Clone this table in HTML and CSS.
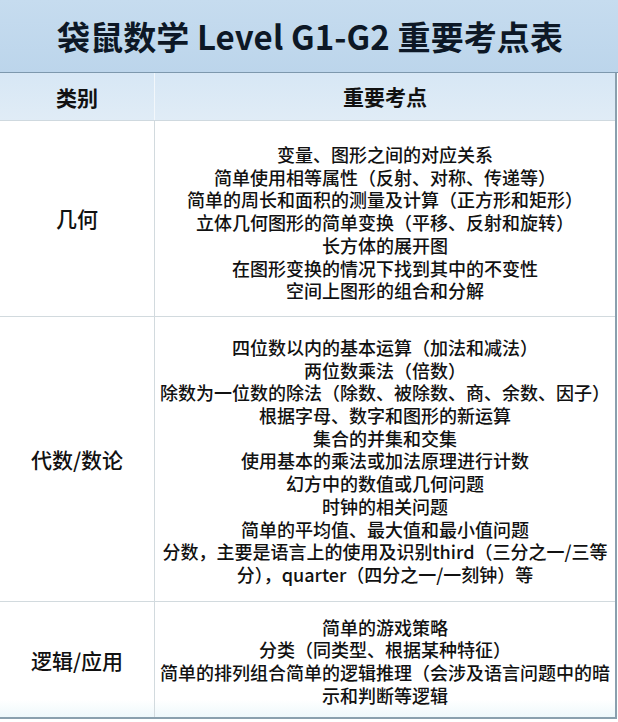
FILE: index.html
```html
<!DOCTYPE html>
<html lang="zh-CN">
<head>
<meta charset="utf-8">
<title>袋鼠数学 Level G1-G2 重要考点表</title>
<link rel="stylesheet" href="styles.css">
</head>
<body>
<div class="page">
  <div class="title">袋鼠数学 Level G1-G2 重要考点表</div>
  <div class="table">
    <div class="row head">
      <div class="cell cat">类别</div>
      <div class="cell items">重要考点</div>
    </div>
    <div class="row r1">
      <div class="cell cat">几何</div>
      <div class="cell items">
        <div>变量、图形之间的对应关系</div>
        <div>简单使用相等属性（反射、对称、传递等）</div>
        <div>简单的周长和面积的测量及计算（正方形和矩形）</div>
        <div>立体几何图形的简单变换（平移、反射和旋转）</div>
        <div>长方体的展开图</div>
        <div>在图形变换的情况下找到其中的不变性</div>
        <div>空间上图形的组合和分解</div>
      </div>
    </div>
    <div class="row r2">
      <div class="cell cat">代数/数论</div>
      <div class="cell items">
        <div>四位数以内的基本运算（加法和减法）</div>
        <div>两位数乘法（倍数）</div>
        <div>除数为一位数的除法（除数、被除数、商、余数、因子）</div>
        <div>根据字母、数字和图形的新运算</div>
        <div>集合的并集和交集</div>
        <div>使用基本的乘法或加法原理进行计数</div>
        <div>幻方中的数值或几何问题</div>
        <div>时钟的相关问题</div>
        <div>简单的平均值、最大值和最小值问题</div>
        <div>分数，主要是语言上的使用及识别third（三分之一/三等<br>分），quarter（四分之一/一刻钟）等</div>
      </div>
    </div>
    <div class="row r3">
      <div class="cell cat">逻辑/应用</div>
      <div class="cell items">
        <div>简单的游戏策略</div>
        <div>分类（同类型、根据某种特征）</div>
        <div>简单的排列组合简单的逻辑推理（会涉及语言问题中的暗<br>示和判断等逻辑</div>
      </div>
    </div>
  </div>
</div>
</body>
</html>
```
FILE: styles.css
```css
html, body {
  margin: 0;
  padding: 0;
  background: #ffffff;
}
body {
  font-family: "Noto Sans CJK SC", "Noto Sans", sans-serif;
  color: #111111;
}
.page {
  width: 618px;
  height: 722px;
  overflow: hidden;
}
.title {
  height: 72px;
  border-bottom: 1px solid #7d98ad;
  background: linear-gradient(#c6dcef, #bcd5eb);
  display: flex;
  align-items: center;
  justify-content: center;
  font-size: 33px;
  font-weight: 700;
  color: #0d1826;
  letter-spacing: 0.1px;
  padding-left: 2px;
}
.table {
  width: 615px;
  border-right: 2px solid #8aa0ae;
  border-bottom: 2px solid #8aa0ae;
}
.row {
  display: grid;
  grid-template-columns: 155px 1fr;
  border-bottom: 1px solid #d2dade;
}
.row:last-child {
  border-bottom: none;
}
.cell {
  display: flex;
  flex-direction: column;
  align-items: center;
  justify-content: center;
  text-align: center;
}
.cat {
  border-right: 1px solid #d2dade;
  font-size: 21px;
  font-weight: 500;
}
.items {
  font-size: 18px;
  line-height: 22.7px;
  font-weight: 500;
}
.head {
  height: 47px;
  background: linear-gradient(#d7e7f5, #e0ecf6);
  border-bottom: 1px solid #cfd9df;
}
.head .cell {
  font-size: 21px;
  font-weight: 700;
}
.head .cat {
  border-right-color: #f2f7fb;
}
.r1 .items {
  padding: 22px 0 14px;
}
.r2 .items {
  padding: 19px 0 15px;
}
.r3 .items {
  padding: 14px 0 11px;
}
.r3 {
  background: linear-gradient(#ffffff 85%, #eef8fb);
}
```
